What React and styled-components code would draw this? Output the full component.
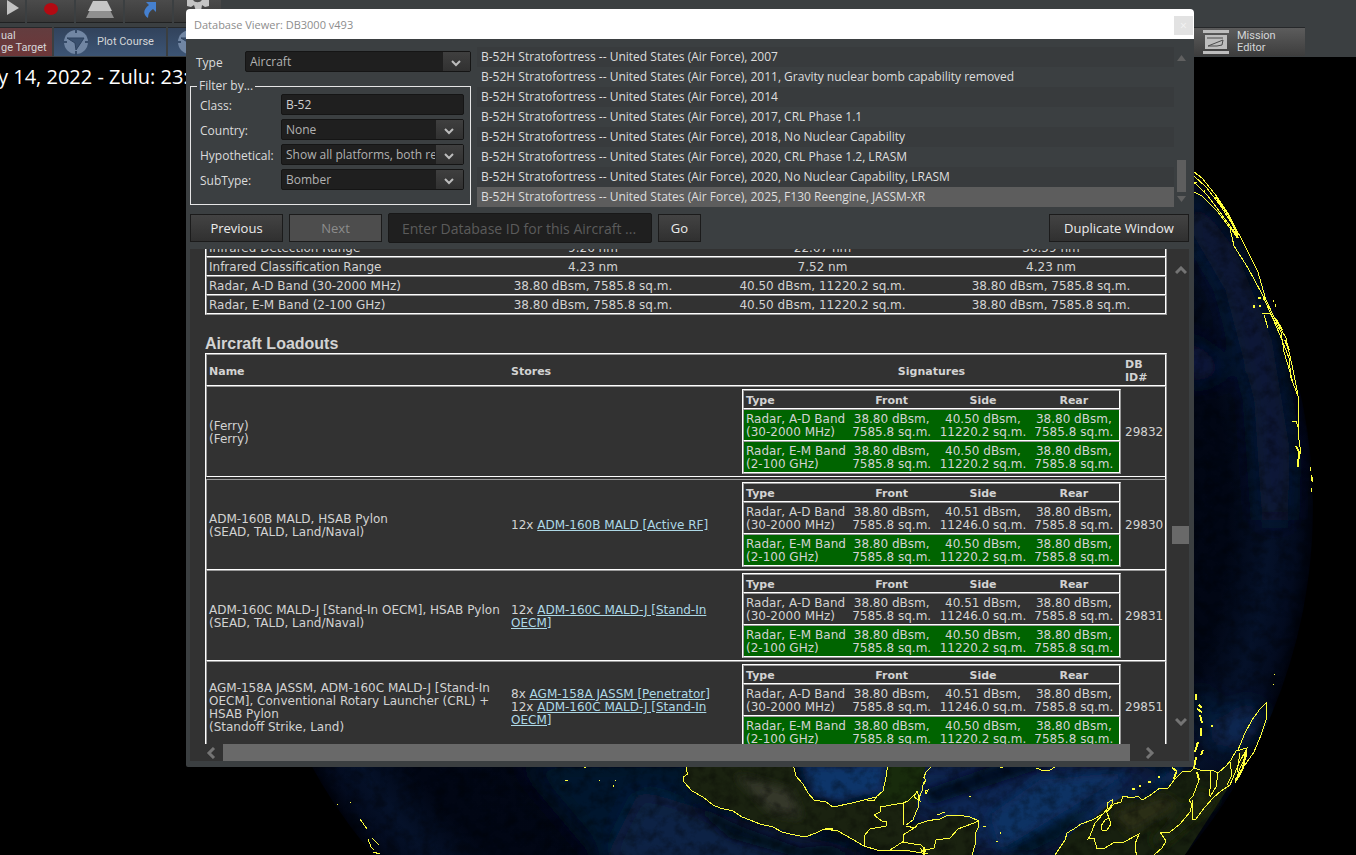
import React from "react";
import styled, { createGlobalStyle, css } from "styled-components";

const UI_FONT = '"Open Sans", "Noto Sans", sans-serif';
const DOC_FONT = '"DejaVu Sans", Verdana, sans-serif';

const GlobalStyle = createGlobalStyle`
  *, *::before, *::after { box-sizing: border-box; }
  body { margin: 0; background: #000; font-family: ${UI_FONT}; overflow: hidden; }
  button, input, select { font-family: inherit; margin: 0; }
`;

const Desktop = styled.div`
  position: relative;
  height: 100vh;
  min-height: 600px;
  overflow: hidden;
  background: #000;
`;

const Scene = styled.svg`
  position: absolute;
  inset: 0;
  width: 100%;
  height: 100%;
`;

const TopBar = styled.header`
  position: relative;
  height: 57px;
  background: #3b3f41;
  overflow: hidden;
`;

const TimeControls = styled.div`
  display: flex;
  gap: 2px;
  height: 26px;
`;

const TimeButton = styled.button`
  display: flex;
  align-items: flex-start;
  justify-content: center;
  width: ${(p) => (p.$cut ? "25px" : "47px")};
  height: 23px;
  padding: 0;
  border: 0;
  border-bottom: 1px solid #202122;
  background: linear-gradient(#4b4b4b, #383838);
`;

const ModeBar = styled.div`
  display: flex;
  gap: 2px;
  height: 31px;
  padding-top: 1px;
`;

const modeTones = {
  red: "linear-gradient(#633d3f, #6e3739)",
  blue: "linear-gradient(#32435c, #3c5474)",
  grey: "linear-gradient(#5c5c5c, #3d3d3d)",
};

const ModeButton = styled.button`
  display: flex;
  align-items: center;
  gap: 8px;
  height: 29px;
  width: ${(p) => p.$width};
  padding: 0 4px 0 ${(p) => p.$inset};
  border: 0;
  border-top: 1px solid #26282a;
  background: ${(p) => modeTones[p.$tone]};
  color: #d4d6d8;
  font: 11px/12px Roboto, sans-serif;
  text-align: left;
  white-space: nowrap;
`;

const Spacer = styled.div`
  flex: 1;
`;

const MissionSlot = styled.div`
  padding-right: 51px;
`;

const Clock = styled.p`
  position: relative;
  margin: 0;
  padding-top: 6px;
  color: #fff;
  font-size: 20px;
  line-height: 28px;
  white-space: nowrap;
  text-indent: -2px;
`;

const Window = styled.section`
  position: absolute;
  top: 9px;
  bottom: 88px;
  left: 186px;
  right: 162px;
  display: flex;
  flex-direction: column;
  border-radius: 4px 4px 2px 2px;
  background: #3b3f41;
  overflow: hidden;
`;

const TitleBar = styled.header`
  display: flex;
  justify-content: space-between;
  align-items: center;
  flex: none;
  height: 30px;
  padding: 0 1px 0 8px;
  background: #fff;
`;

const Title = styled.h1`
  margin: 0;
  color: #8d8d8d;
  font-size: 11px;
  font-weight: 400;
`;

const CloseButton = styled.button`
  width: 19px;
  height: 19px;
  margin-top: 2px;
  padding: 0;
  border: 0;
  background: #e2e2e2;
  color: #f3f3f3;
  font-size: 12px;
  line-height: 19px;
`;

const WindowBody = styled.div`
  display: flex;
  flex-direction: column;
  flex: 1;
  min-height: 0;
  padding: 8px 5px 6px 4px;
`;

const Chooser = styled.div`
  display: flex;
  gap: 6px;
  height: 160px;
  flex: none;
`;

const Filters = styled.form`
  width: 281px;
  padding-top: 4px;
`;

const TypeRow = styled.div`
  display: flex;
  align-items: center;
  height: 21px;
  padding-left: 6px;
`;

const Label = styled.label`
  flex: none;
  width: ${(p) => p.$width};
  padding-top: 2px;
  color: #dcdcdc;
  font-size: 12px;
  line-height: 21px;
`;

const SelectBox = styled.div`
  position: relative;
  flex: 1;
  min-width: 0;
  height: 21px;

  svg {
    position: absolute;
    top: 1px;
    right: 1px;
    width: 27px;
    height: 19px;
    background: linear-gradient(#3f3f3f, #313131);
    pointer-events: none;
  }
`;

const fieldLook = css`
  width: 100%;
  height: 21px;
  border: 1px solid #151515;
  border-radius: 2px;
  background: #1f1f1f;
  color: #b2b2b2;
  font-size: 12px;
`;

const NativeSelect = styled.select`
  ${fieldLook}
  display: block;
  appearance: none;
  padding: 0 28px 0 4px;
`;

const TextField = styled.input`
  ${fieldLook}
  flex: 1;
  min-width: 0;
  padding: 0 4px;
  color: #cfcfcf;
`;

const FilterSet = styled.fieldset`
  display: flex;
  flex-direction: column;
  gap: 4px;
  height: 127px;
  margin: 6px 0 0;
  padding: 0 6px 0 9px;
  border: 1px solid #e6e6e6;
`;

const Legend = styled.legend`
  margin-left: -3px;
  padding: 0 2px;
  color: #dcdcdc;
  font-size: 12px;
  line-height: 16px;
`;

const FilterRow = styled.div`
  display: flex;
  align-items: center;
  height: 21px;
`;

const ListPane = styled.div`
  display: flex;
  flex: 1;
  min-width: 0;
`;

const PlatformList = styled.ul`
  flex: 1;
  min-width: 0;
  margin: 0;
  padding: 0;
  list-style: none;
  overflow: hidden;
`;

const PlatformItem = styled.li`
  height: 20px;
  padding-left: 4px;
  color: #dedede;
  font-size: 12px;
  line-height: 20px;
  white-space: nowrap;
  background: ${(p) => (p["aria-selected"] ? "#5d5d5d" : "transparent")};

  &:nth-child(odd) { background: #383b3d; }
`;

const ListScroll = styled.div`
  display: flex;
  flex-direction: column;
  align-items: center;
  width: 15px;
  padding: 8px 0 5px;
  svg { display: block; fill: #606060; }
`;

const ListThumb = styled.div`
  width: 9px;
  height: 32px;
  margin: auto 0 4px;
  background: #5e5e5e;
`;

const Actions = styled.div`
  display: flex;
  align-items: center;
  flex: none;
  gap: 6px;
  height: 42px;
`;

const PushButton = styled.button`
  width: ${(p) => p.$width};
  height: 28px;
  padding: 0;
  border: 1px solid #1b1b1b;
  background: linear-gradient(#434343, #303030);
  color: #ececec;
  font-size: 13px;

  &:disabled { background: #4d4d4d; color: #8c8c8c; }
`;

const IdField = styled.input`
  width: 264px;
  height: 30px;
  padding: 0 13px;
  border: 1px solid #181818;
  border-radius: 2px;
  background: #1f1f1f;
  color: #ccc;
  font-size: 14px;
  &::placeholder { color: #5b5b5b; opacity: 1; }
`;

const Viewer = styled.div`
  display: grid;
  grid-template-columns: minmax(0, 1fr) 17px;
  grid-template-rows: minmax(0, 1fr) 17px;
  flex: 1;
  min-height: 0;
  background: #323232;
`;

const Sheet = styled.main`
  padding: 0 5px 0 15px;
  overflow: hidden;
  color: #d3d3d3;
  font: 12px/13px ${DOC_FONT};
`;

const lines = css`
  border-collapse: separate;
  border-spacing: 0;
  table-layout: fixed;
  width: 100%;
  border: 1px solid #fff;
  border-right-color: #9a9a9a;
  border-bottom-color: #9a9a9a;
`;

const RangeTable = styled.table`
  ${lines}
  margin-top: -12px;
`;

const LoadoutTable = styled.table`
  ${lines}
`;

const SignatureTable = styled.table`
  ${lines}
`;

const cellLook = css`
  padding: ${(p) => (p.$holdsTable ? "2px" : "3px 2px 1px")};
  border: 0 solid #fff;
  border-top: 1px solid #9a9a9a;
  border-bottom-width: 1px;
  text-align: ${(p) => (p.$center ? "center" : "left")};
  vertical-align: middle;
  white-space: ${(p) => (p.$nowrap ? "nowrap" : "normal")};

  &:first-child { border-left: 1px solid #9a9a9a; }
  &:last-child { border-right: 1px solid #fff; }
`;

const Cell = styled.td`
  ${cellLook}
`;

const HeadCell = styled.th`
  ${cellLook}
  font-size: 11px;
  font-weight: 700;
`;

const SignatureRow = styled.tr`
  background: ${(p) => (p.$same ? "#006400" : "transparent")};
`;

const GapCell = styled.td`
  height: 2px;
  padding: 0;
  border-right: 1px solid #fff;
`;

const SectionTitle = styled.h2`
  margin: 20px 0 0;
  font: bold 16px/18px "Liberation Sans", Arial, sans-serif;
`;

const StoreLink = styled.a`
  color: #add8e6;
  text-decoration: underline;
`;

const VScroll = styled.div`
  grid-row: 1 / 3;
  grid-column: 2;
  display: flex;
  flex-direction: column;
  align-items: center;
  padding: 17px 0 35px;
`;

const VThumb = styled.div`
  width: 17px;
  height: 18px;
  background: #696969;
`;

const VGap = styled.div`
  flex: ${(p) => p.$share};
`;

const HScroll = styled.div`
  display: flex;
  align-items: center;
  padding: 0 17px 0 16px;
`;

const HThumb = styled.div`
  flex: 1;
  height: 17px;
  margin: 0 15px 0 7px;
  background: #696969;
`;

const platforms = [
  "2007",
  "2011, Gravity nuclear bomb capability removed",
  "2014",
  "2017, CRL Phase 1.1",
  "2018, No Nuclear Capability",
  "2020, CRL Phase 1.2, LRASM",
  "2020, No Nuclear Capability, LRASM",
  "2025, F130 Reengine, JASSM-XR",
];

const ranges = [
  ["Infrared Detection Range", "9.26 nm", "22.67 nm", "30.59 nm"],
  ["Infrared Classification Range", "4.23 nm", "7.52 nm", "4.23 nm"],
  ["Radar, A-D Band (30-2000 MHz)", "38.80 dBsm, 7585.8 sq.m.", "40.50 dBsm, 11220.2 sq.m.", "38.80 dBsm, 7585.8 sq.m."],
  ["Radar, E-M Band (2-100 GHz)", "38.80 dBsm, 7585.8 sq.m.", "40.50 dBsm, 11220.2 sq.m.", "38.80 dBsm, 7585.8 sq.m."],
];

const loadouts = [
  { id: 29832, name: "(Ferry)", role: "(Ferry)", stores: [], clean: true },
  { id: 29830, name: "ADM-160B MALD, HSAB Pylon", role: "(SEAD, TALD, Land/Naval)", stores: [["12x", "ADM-160B MALD [Active RF]"]], gap: true },
  { id: 29831, name: "ADM-160C MALD-J [Stand-In OECM], HSAB Pylon", role: "(SEAD, TALD, Land/Naval)", stores: [["12x", "ADM-160C MALD-J [Stand-In OECM]"]] },
  {
    id: 29851,
    name: "AGM-158A JASSM, ADM-160C MALD-J [Stand-In OECM], Conventional Rotary Launcher (CRL) + HSAB Pylon",
    role: "(Standoff Strike, Land)",
    stores: [["8x", "AGM-158A JASSM [Penetrator]"], ["12x", "ADM-160C MALD-J [Stand-In OECM]"]],
  },
];

function Chevron({ d = "M1 2 L6 7 L11 2", w = 12, h = 9, color = "#747474" }) {
  return (
    <svg width={w} height={h} viewBox={`0 0 ${w} ${h}`} fill="none" stroke={color} strokeWidth="3" aria-hidden="true">
      <path d={d} />
    </svg>
  );
}

function Select({ id, value }) {
  return (
    <SelectBox>
      <NativeSelect id={id} defaultValue={value}>
        <option>{value}</option>
      </NativeSelect>
      <svg viewBox="0 0 27 19" fill="none" stroke="#bcbcbc" strokeWidth="2" aria-hidden="true">
        <path d="M9 9 L13 13 L17 9" />
      </svg>
    </SelectBox>
  );
}

function Filter({ id, label, children }) {
  return (
    <FilterRow>
      <Label htmlFor={id} $width="81px">{label}</Label>
      {children}
    </FilterRow>
  );
}

function Signatures({ clean }) {
  const rows = [
    { band: ["Radar, A-D Band", "(30-2000 MHz)"], side: clean ? ["40.50", "11220.2"] : ["40.51", "11246.0"], same: clean },
    { band: ["Radar, E-M Band", "(2-100 GHz)"], side: ["40.50", "11220.2"], same: true },
  ];
  return (
    <SignatureTable>
      <colgroup>
        <col width="103" />
        <col />
        <col />
        <col />
      </colgroup>
      <thead>
        <tr>
          <HeadCell>Type</HeadCell>
          <HeadCell $center>Front</HeadCell>
          <HeadCell $center>Side</HeadCell>
          <HeadCell $center>Rear</HeadCell>
        </tr>
      </thead>
      <tbody>
        {rows.map((r) => (
          <SignatureRow key={r.band[0]} $same={r.same}>
            <Cell $nowrap>{r.band[0]}<br />{r.band[1]}</Cell>
            {[["38.80", "7585.8"], r.side, ["38.80", "7585.8"]].map((v, i) => (
              <Cell key={i} $center $nowrap>{v[0]} dBsm,<br />{v[1]} sq.m.</Cell>
            ))}
          </SignatureRow>
        ))}
      </tbody>
    </SignatureTable>
  );
}

function Globe() {
  return (
    <Scene viewBox="0 0 1356 855" preserveAspectRatio="xMidYMid slice" aria-hidden="true">
      <defs>
        <clipPath id="disc"><circle cx="779" cy="508" r="534" /></clipPath>
        <radialGradient id="sea" gradientUnits="userSpaceOnUse" cx="779" cy="508" r="534">
          <stop offset="0" stopColor="#020817" />
          <stop offset="0.84" stopColor="#010614" />
          <stop offset="0.92" stopColor="#051129" />
          <stop offset="0.97" stopColor="#030b1f" />
          <stop offset="1" stopColor="#00030d" />
        </radialGradient>
        <filter id="soft" x="-50%" y="-50%" width="200%" height="200%"><feGaussianBlur stdDeviation="12" /></filter>
        <filter id="soft2" x="-50%" y="-50%" width="200%" height="200%"><feGaussianBlur stdDeviation="5" /></filter>
        <filter id="grain" x="0" y="0" width="100%" height="100%">
          <feTurbulence type="fractalNoise" baseFrequency="0.083" numOctaves="5" seed="11" />
          <feColorMatrix values="0 0 0 0 0  0 0 0 0 0  0 0 0 0 0  2.6 0 0 0 -1.1" />
          <feComposite in2="SourceGraphic" operator="in" />
        </filter>
      </defs>
      <g clipPath="url(#disc)">
        <rect x="240" y="0" width="1116" height="855" fill="url(#sea)" />
        <g filter="url(#soft)">
          <path d="M1190 190 L1236 250 L1272 340 L1290 450 L1288 520 L1262 520 L1254 400 L1225 290 L1190 230Z" fill="#081a3a" />
          <path d="M1180 335 L1205 350 L1228 372 L1185 385Z" fill="#0a1f4a" />
          <path d="M520 760 L700 760 L690 800 L860 855 L600 855Z" fill="#06172f" />
          <path d="M640 790 L720 815 L860 850 L860 870 L600 870Z" fill="#0a2245" />
          <path d="M790 760 L1060 760 L1180 770 L1100 820 L1050 855 L980 855 L900 810Z" fill="#0b2652" />
          <path d="M1195 700 L1225 750 L1265 720 L1245 705 L1220 735 L1200 690Z" fill="#143a73" />
        </g>
        <g filter="url(#soft2)">
          <path d="M800 765 H886 L882 790 L835 803 L812 795Z" fill="#10356b" />
          <path d="M925 790 L1010 760 L1060 762 L930 805Z" fill="#041022" />
          <path d="M990 815 L1040 780 L1130 772 L1050 820 L1000 850Z" fill="#0f3264" />
          <path d="M1140 790 L1185 766 L1180 776 L1110 800 L1080 825Z" fill="#14407a" />
          <path d="M1000 850 L1100 800 L1060 840 L1030 855Z" fill="#061429" />
          <path d="M686 800 L740 826 L800 848 L830 845 L860 858 L800 858 L730 838Z" fill="#020b1a" />
        </g>
        <path d="M688 764 L683 776 L684 782 L692 791 L713 805 L733 811 L750 820 L773 827 L805 837 L828 829 L852 839 L877 850 L928 853 L930 860 L972 860 L977 830 L979 821 L957 815 L927 821 L906 826 L916 812 L917 800 L923 778 L926 764 H888 L886 777 L883 791 L873 799 L852 803 L833 807 L826 802 L812 799 L805 788 L796 776 L793 764Z" fill="#1a2210" />
        <path d="M888 764 H926 L917 800 L880 807 L874 800 L884 790Z" fill="#182b0c" />
        <path d="M1055 855 L1065 840 L1075 830 L1092 820 L1107 806 L1122 797 L1142 800 L1168 787 L1177 775 L1190 769 L1218 773 L1230 761 L1244 748 L1246 760 L1185 855Z" fill="#17200f" />
        <g filter="url(#soft2)">
          <path d="M735 775 L790 790 L802 818 L770 812Z" fill="#34382a" />
          <path d="M1110 812 L1165 795 L1180 805 L1130 835Z" fill="#2b2f19" />
          <path d="M1200 790 L1220 800 L1160 850 L1150 840Z" fill="#1c280e" />
        </g>
        <rect x="300" y="100" width="1020" height="755" filter="url(#grain)" opacity="0.32" />
      </g>
      <g fill="none" stroke="#ffff3c" strokeWidth="1" shapeRendering="crispEdges">
        <path d="M688 764 L686 770 L688 774 L683 777 L684 782 L692 791 L703 797 L713 805 L720 808 L733 811 L742 817 L750 820 L760 824 L773 827 L782 832 L790 834 L805 837 L816 833 L824 829 L838 831 L852 839 L864 846 L877 850 L890 850 L910 851 L928 854" />
        <path d="M793 764 L796 776 L803 784 L808 793 L814 800 L826 802 L833 807 L852 803 L868 799 L876 797 L883 791 L886 777 L888 764 M867 800 L874 801 L877 796" />
        <path d="M931 767 L926 772 L924 777 L926 781 L922 786 L922 791 L918 800 L919 806 L916 812 L913 820 L906 825 M923 777 L926 780 L923 784 M914 797 L917 791 L920 801 L914 797" />
        <path d="M906 826 L915 828 L918 824 L927 821 L940 819 L946 816 L957 815 L970 817 L979 821 L978 828 L976 832 L975 845 L972 855" />
        <path d="M864 846 V836 L870 829 L886 826 L887 822 L882 821 L874 815 L880 812 V807 L903 803 V825 M903 803 L908 801 L915 794 M914 828 L903 835 L904 841 L890 850 M901 842 L921 845 L926 850 L934 848 L936 840 L950 838 L958 829 L979 821 M920 848 L925 854" />
        <path d="M825 829 L833 829 M921 851 L926 851 M924 847 V855" strokeWidth="2" />
        <path d="M925 791 L928 790 L926 794Z M937 815 L945 812 M932 819 h2 M969 796 h2 M983 826 h3 M1000 832 v2 M996 841 h2 M1036 768 L1044 771 L1050 770 L1055 767 M1000 767 h3" />
        <path d="M1055 855 L1065 840 L1067 833 L1077 827 L1081 824 L1092 820 L1103 814 L1108 808 L1107 803 L1112 800 L1112 804 L1106 813 L1114 804 L1121 802 L1123 796 L1132 798 L1138 796 L1142 800 L1149 796 L1160 788 L1168 788 L1175 779 L1183 771 L1190 772 L1194 768 L1203 771 L1212 770 L1218 773 L1226 766 L1231 760 L1236 751 L1247 748 L1246 757 L1240 768 L1235 783" />
        <path d="M1238 750 L1245 733 L1252 720 L1260 709 L1266 703 L1266 720 L1261 735 L1254 752 L1240 772 L1235 780 M1246 750 L1239 763 L1230 785 L1221 791 L1213 798 L1205 807 L1195 820 L1192 819 L1193 806 L1189 800 L1193 796 L1199 780 L1197 772 M1210 771 L1211 782 L1209 796 M1218 773 L1216 787 L1210 797 M1230 762 L1232 775 L1227 785 M1240 753 L1237 772" />
        <path d="M1103 814 L1095 823 L1090 836 L1088 839 L1094 838 L1097 849 L1105 848 L1115 842 L1122 843 L1139 834 L1135 844 L1135 850 L1137 855 M1193 800 L1190 812 L1180 824 L1170 832 L1160 832 L1166 841 L1162 848 L1154 855 M1107 813 L1109 818 L1105 820 L1101 826 L1102 830 L1107 830 L1111 824 L1109 818" />
        <path d="M1196 694 v6 M1199 705 L1202 708 M1197 709 l5 3 M1200 715 l2 8 M1201 728 v8 M1198 742 l-3 10 M1203 750 l-2 5 M1196 757 L1194 768 M1211 726 h2 M1172 768 l5 3 M1158 777 h2 M1148 782 h3 M1139 786 h2 M1132 789 h3" strokeWidth="2" />
        <path d="M1246 751 L1243 768 M1243 768 L1236 781 M1176 772 L1174 779 M1197 772 L1199 780" strokeWidth="2" />
        <path d="M1274 674 h1 M1273 684 h1 M1194 172 L1202 178 L1218 198 L1230 218 L1242 240 L1258 272 L1266 300 L1274 317 L1286 338 L1292 365 L1298 395 L1299 440 L1301 453 L1298 455 M1194 176 L1206 187 L1220 205 L1236 230 M1194 192 L1202 196 L1218 212 L1230 228 L1234 246 L1248 268 L1262 294 L1270 312 L1280 335 L1289 358 L1291 378 L1298 396 M1194 182 L1208 196 L1222 215 L1238 237 M1262 313 h9 M1264 315 L1268 328 M1270 313 L1281 332 L1284 352 L1293 382 M1292 421 h4 L1299 430" />
        <path d="M1216 197 L1228 214 L1238 235 M1232 229 L1238 238 M1264 297 v3 M1275 318 L1282 330 M1285 340 L1289 350 M1296 446 L1299 452 L1298 467 M1258 298 h3 M1260 305 v2 M1254 305 v3" strokeWidth="2" />
        <path d="M1310 467 v4 M1311 475 v6 M1312 477 v5 M1311 488 v4 M1273 300 v2 M1275 304 v3 M1194 184 l3 -2 M1204 190 v3" />
        <path d="M360 819 L367 829 M372 838 L379 845 M368 839 L371 847 L374 850 M373 852 L380 854 M337 804 h1 M350 802 h1 M565 780 h3 M599 780 h1 M613 785 v2 M615 780 h1 M584 767 h2" />
      </g>
    </Scene>
  );
}

function Compass() {
  return (
    <svg width="26" height="26" viewBox="0 0 26 26" aria-hidden="true">
      <circle cx="13" cy="13" r="12" fill="#7186a3" />
      <path d="M13 0V4M13 22V26M0 13H4M22 13H26" stroke="#364b68" strokeWidth="2" />
      <path d="M4 9 L21 9 L13 21 L12 14Z" fill="#3a506e" stroke="#2d415d" />
    </svg>
  );
}

export default function App() {
  return (
    <Desktop>
      <GlobalStyle />
      <Globe />
      <TopBar>
        <TimeControls>
          <TimeButton $cut aria-label="Play">
            <svg width="12" height="16"><path d="M0 0 L12 8 L0 15Z" fill="#c2c2c2" /></svg>
          </TimeButton>
          <TimeButton aria-label="Record">
            <svg width="16" height="18"><ellipse cx="8" cy="9" rx="7" ry="6" fill="#b30a12" /></svg>
          </TimeButton>
          <TimeButton aria-label="Layers">
            <svg width="28" height="20"><path d="M5 8 H23 L28 18 H0Z" fill="#8f8f8f" /><path d="M7 1 H21 L26 11 H2Z" fill="#c6c6c6" /></svg>
          </TimeButton>
          <TimeButton aria-label="Jump">
            <svg width="16" height="20"><path d="M5 2 L15 2 L15 12 L12 9 Q7 12 7 18 Q-1 12 8 5Z" fill="#4580cf" /></svg>
          </TimeButton>
          <TimeButton aria-label="Settings">
            <svg width="26" height="12"><path d="M2 0 V6 L6 7 L9 5 L11 11 H16 L17 5 L20 7 L24 6 V0 H17 A5 4 0 0 1 8 0Z" fill="#c4c4c4" /></svg>
          </TimeButton>
        </TimeControls>
        <ModeBar>
          <ModeButton $tone="red" $width="52px" $inset="1px">ual<br />ge Target</ModeButton>
          <ModeButton $tone="blue" $width="112px" $inset="9px"><Compass />Plot Course</ModeButton>
          <ModeButton $tone="blue" $width="112px" $inset="9px" aria-label="Course"><Compass /></ModeButton>
          <Spacer />
          <MissionSlot>
            <ModeButton $tone="grey" $width="119px" $inset="17px">
              <svg width="26" height="26" viewBox="0 0 26 26" aria-hidden="true">
                <path d="M0 1H26V4H0ZM0 22H26V25H0ZM2 6H24V20H2Z" fill="#bdbdbd" />
                <path d="M4 9 H20 M5 17 L20 11 L19 16 L14 17Z" fill="none" stroke="#4a4a4a" strokeWidth="1" />
              </svg>
              <span>Mission<br />Editor</span>
            </ModeButton>
          </MissionSlot>
        </ModeBar>
      </TopBar>
      <Clock>y 14, 2022 - Zulu: 23:</Clock>

      <Window aria-label="Database Viewer">
        <TitleBar>
          <Title>Database Viewer: DB3000 v493</Title>
          <CloseButton aria-label="Close">×</CloseButton>
        </TitleBar>
        <WindowBody>
          <Chooser>
            <Filters>
              <TypeRow>
                <Label htmlFor="type" $width="49px">Type</Label>
                <Select id="type" value="Aircraft" />
              </TypeRow>
              <FilterSet>
                <Legend>Filter by...</Legend>
                <Filter id="class" label="Class:"><TextField id="class" defaultValue="B-52" /></Filter>
                <Filter id="country" label="Country:"><Select id="country" value="None" /></Filter>
                <Filter id="hypo" label="Hypothetical:"><Select id="hypo" value="Show all platforms, both real and hypothetical" /></Filter>
                <Filter id="subtype" label="SubType:"><Select id="subtype" value="Bomber" /></Filter>
              </FilterSet>
            </Filters>
            <ListPane>
              <PlatformList role="listbox" aria-label="Platforms">
                {platforms.map((p, i) => (
                  <PlatformItem key={p} role="option" aria-selected={i === platforms.length - 1}>
                    B-52H Stratofortress -- United States (Air Force), {p}
                  </PlatformItem>
                ))}
              </PlatformList>
              <ListScroll aria-hidden="true">
                <svg width="9" height="6"><path d="M0 6 L4.500 0 L9 6Z" /></svg>
                <ListThumb />
                <svg width="9" height="6"><path d="M0 0 L4.500 6 L9 0Z" /></svg>
              </ListScroll>
            </ListPane>
          </Chooser>
          <Actions>
            <PushButton $width="93px">Previous</PushButton>
            <PushButton $width="93px" disabled>Next</PushButton>
            <IdField aria-label="Database ID" placeholder="Enter Database ID for this Aircraft ..." />
            <PushButton $width="43px">Go</PushButton>
            <Spacer />
            <PushButton $width="140px">Duplicate Window</PushButton>
          </Actions>
          <Viewer>
            <Sheet>
              <RangeTable>
                <colgroup>
                  <col />
                  <col width="230" />
                  <col width="229" />
                  <col width="229" />
                </colgroup>
                <tbody>
                  {ranges.map(([name, ...values]) => (
                    <tr key={name}>
                      <Cell>{name}</Cell>
                      {values.map((v, i) => <Cell key={i} $center>{v}</Cell>)}
                    </tr>
                  ))}
                </tbody>
              </RangeTable>
              <SectionTitle>Aircraft Loadouts</SectionTitle>
              <LoadoutTable>
                <colgroup>
                  <col />
                  <col width="231" />
                  <col width="383" />
                  <col width="43" />
                </colgroup>
                <thead>
                  <tr>
                    <HeadCell>Name</HeadCell>
                    <HeadCell>Stores</HeadCell>
                    <HeadCell $center>Signatures</HeadCell>
                    <HeadCell>DB ID#</HeadCell>
                  </tr>
                </thead>
                <tbody>
                  {loadouts.map((l) => (
                    <React.Fragment key={l.id}>
                      {l.gap && <tr><GapCell colSpan={4} /></tr>}
                      <tr>
                        <Cell>{l.name}<br />{l.role}</Cell>
                        <Cell>
                          {l.stores.map(([count, store]) => (
                            <div key={store}>{count} <StoreLink href="#store">{store}</StoreLink></div>
                          ))}
                        </Cell>
                        <Cell $holdsTable><Signatures clean={l.clean} /></Cell>
                        <Cell>{l.id}</Cell>
                      </tr>
                    </React.Fragment>
                  ))}
                </tbody>
              </LoadoutTable>
            </Sheet>
            <VScroll aria-hidden="true">
              <Chevron d="M1 7 L6 2 L11 7" />
              <VGap $share="252" />
              <VThumb />
              <VGap $share="174" />
              <Chevron />
            </VScroll>
            <HScroll aria-hidden="true">
              <Chevron w={10} h={12} d="M8 1 L3 6 L8 11" />
              <HThumb />
              <Chevron w={10} h={12} d="M2 1 L7 6 L2 11" />
            </HScroll>
          </Viewer>
        </WindowBody>
      </Window>
    </Desktop>
  );
}
